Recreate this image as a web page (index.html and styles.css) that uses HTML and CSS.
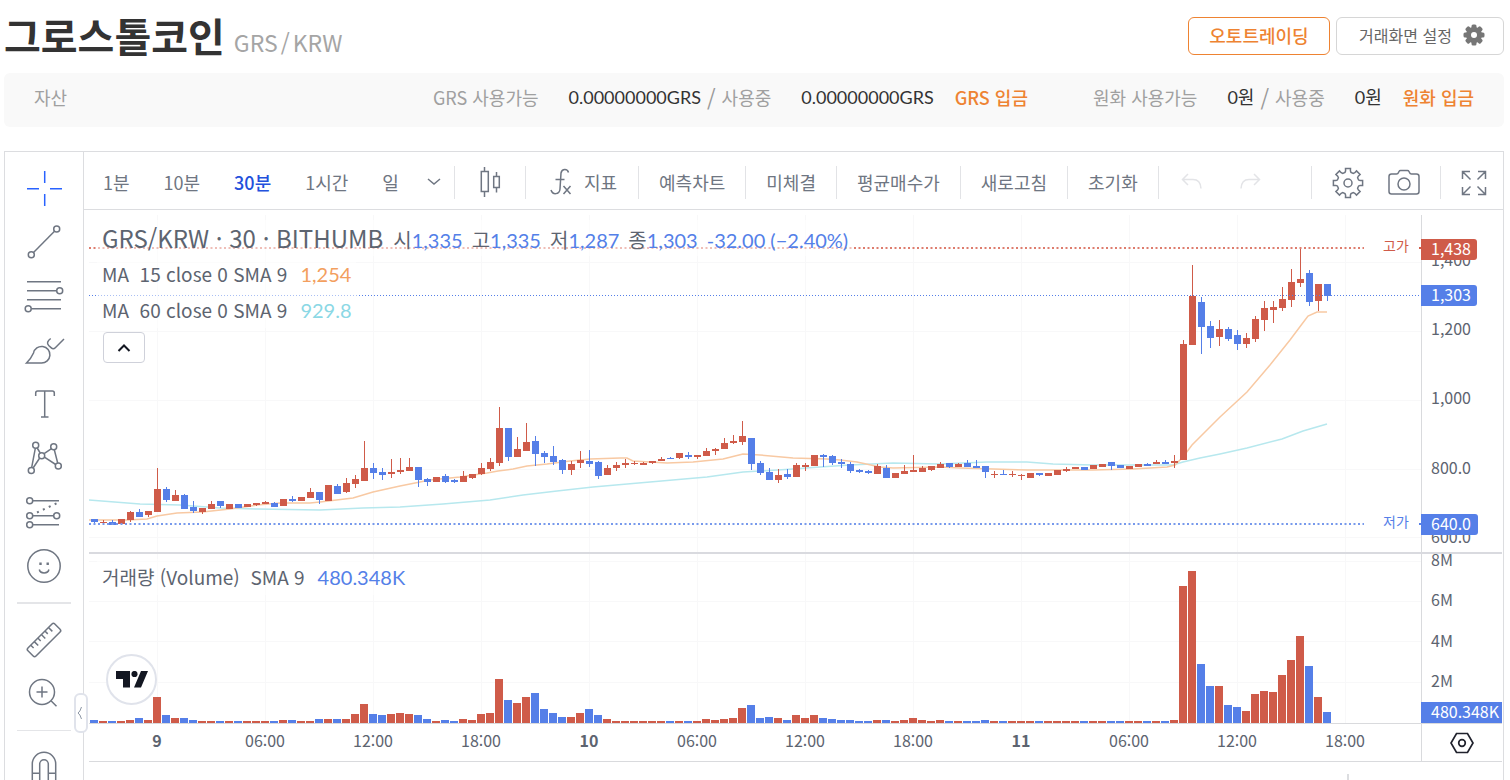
FILE: index.html
```html
<!DOCTYPE html>
<html lang="ko">
<head>
<meta charset="utf-8">
<title>그로스톨코인 GRS/KRW</title>
<link rel="stylesheet" href="styles.css">
</head>
<body>
<header class="page-head">
  <h1 class="coin">그로스톨코인<span class="pair">GRS<span class="slash">/</span>KRW</span></h1>
  <div class="head-actions">
    <button class="btn btn-accent" type="button">오토트레이딩</button>
    <button class="btn btn-setting" type="button">거래화면 설정
      <svg width="22" height="22" viewBox="-11 -11 22 22"><g fill="#767676"><circle r="8"/><g id="teeth"><rect x="-2.5" y="-10.5" width="5" height="21" rx="1.5"/><rect x="-10.5" y="-2.5" width="21" height="5" rx="1.5"/></g><use href="#teeth" transform="rotate(45)"/></g><circle r="3" fill="#fff"/></svg>
    </button>
  </div>
</header>

<section class="assets">
  <span class="muted">자산</span>
  <div class="asset asset-coin"><span class="muted">GRS 사용가능</span><b>0.00000000GRS</b><i>/</i><span class="muted">사용중</span><b>0.00000000GRS</b><a href="#">GRS 입금</a></div>
  <div class="asset"><span class="muted">원화 사용가능</span><b>0원</b><i>/</i><span class="muted">사용중</span><b>0원</b><a href="#">원화 입금</a></div>
</section>

<main class="widget">
  <nav class="tools" aria-label="그리기 도구">
    <button class="tool tool-active" type="button" aria-label="십자선"><svg viewBox="0 0 54 54"><path d="M27.7 10v12M27.7 33v12M10 27.7h12M33 27.7h12"/></svg></button>
    <button class="tool" type="button" aria-label="추세선"><svg viewBox="0 0 54 54"><circle cx="14.3" cy="39.7" r="3"/><circle cx="39.7" cy="14" r="3"/><path d="M16.5 37.5 37.5 16.2"/></svg></button>
    <button class="tool" type="button" aria-label="피보나치"><svg viewBox="0 0 54 54"><path d="M10 12.7h34M10 21.7h29.7M10 30.7h34M14.3 39.7H44"/><circle cx="42.7" cy="21.7" r="3"/><circle cx="11.2" cy="39.7" r="3"/></svg></button>
    <button class="tool" type="button" aria-label="브러쉬"><svg viewBox="0 0 54 54"><path d="M9.5 40c3.500-3.500 5.500-6.500 7-10a8.300 8.300 0 1 1 8 10zM33.700 15.500c-3.500 2.500-4 5-2 7l2.600 2.400q2 1.800 4-.2l8.700-8.700"/></svg></button>
    <button class="tool" type="button" aria-label="텍스트"><svg viewBox="0 0 54 54"><path d="M18.700 19v-3q0-2 2-2h14.600q2 0 2 2v3M27.700 14v26M24 40h7.500"/></svg></button>
    <button class="tool" type="button" aria-label="패턴"><svg viewBox="0 0 54 54"><circle cx="18.700" cy="14.300" r="3"/><circle cx="36.700" cy="15.700" r="3"/><circle cx="24.700" cy="24.700" r="3"/><circle cx="41.300" cy="35" r="3"/><circle cx="14.300" cy="39.500" r="3"/><path d="m18.300 17.400-3.600 19M20.200 17l3 5M34.500 17.700l-7.400 5M37.300 18.700l3.400 13.300M27.400 26.200l11.300 7.300M22.700 27l-6.600 10"/></svg></button>
    <button class="tool" type="button" aria-label="예측"><svg viewBox="0 0 54 54"><circle cx="12.700" cy="15.700" r="3"/><circle cx="12.700" cy="30.700" r="3"/><circle cx="39.700" cy="30.700" r="3"/><circle cx="12.700" cy="39.700" r="3"/><path d="M15.700 15.700H42M15.700 30.700h21M15.700 39.700H42"/><path d="m20 27.500 20-9.300" stroke-dasharray="2 4.500" stroke-width="2"/></svg></button>
    <button class="tool" type="button" aria-label="아이콘"><svg viewBox="0 0 54 54"><circle cx="27" cy="27" r="16.200"/><path d="M22.300 30.500c.8 4.500 8.800 4.500 9.600 0"/><path d="M22.300 24.700h2.400M29.500 24.700h2.400" stroke-width="2.400"/></svg></button>
    <hr>
    <button class="tool" type="button" aria-label="자"><svg viewBox="0 0 54 54"><g transform="rotate(-45 27 28)"><rect x="8" y="22.300" width="38" height="11.400" rx="2"/><path d="M14 22.300v4M19 22.300v5.500M24 22.300v4M29 22.300v5.500M34 22.300v4M39 22.300v5.500"/></g></svg></button>
    <button class="tool" type="button" aria-label="확대"><svg viewBox="0 0 54 54"><circle cx="25" cy="26" r="12.500"/><path d="M25 20.500v11M19.500 26h11M34 34.700l5.500 5.500"/></svg></button>
    <hr class="thin">
    <button class="tool" type="button" aria-label="자석"><svg viewBox="0 0 54 54"><path d="M15.300 45V25a11.700 11.700 0 0 1 23.400 0v20h-7.400V25a4.300 4.300 0 0 0-8.600 0v20zM15.300 34.300h7.400M31.300 34.300h7.400"/></svg></button>
  </nav>
  <button class="fold" type="button" aria-label="도구 접기"><svg width="8" height="14" viewBox="0 0 8 14"><path d="M5.500 1Q4 6 2 7q2 1 3.500 6"/></svg></button>

  <div class="chart">
    <div class="bar">
      <div class="group periods">
        <button type="button">1분</button><button type="button">10분</button><button class="on" type="button">30분</button><button type="button">1시간</button><button type="button">일</button>
        <button class="more" type="button" aria-label="더보기"><svg width="14" height="8" viewBox="0 0 14 8"><path d="m1 1 6 5 6-5"/></svg></button>
      </div>
      <div class="group"><button type="button" aria-label="캔들"><svg width="30" height="30" viewBox="0 0 30 30"><path d="M9.500 0v4M9.500 25v5M6.300 4.500h7v20h-7zM21.500 5v4M21.500 21v4.500M18.700 9.500h5.600v11h-5.600z"/></svg></button></div>
      <div class="group indicators"><button type="button"><svg class="fx" width="24" height="28" viewBox="0 0 24 28"><path d="M19.500 4.500c-1-4-6.500-4-7.500.5l-1 16c-.5 6-7.500 6-9 1M6.500 11.500h9M14.500 18l7 8M21.500 18l-7 8"/></svg>지표</button></div>
      <div class="group"><button type="button">예측차트</button></div>
      <div class="group"><button type="button">미체결</button></div>
      <div class="group"><button type="button">평균매수가</button></div>
      <div class="group"><button type="button">새로고침</button></div>
      <div class="group"><button type="button">초기화</button></div>
      <div class="group undo">
        <button type="button" aria-label="되돌리기" disabled><svg width="22" height="18" viewBox="0 0 22 18"><path d="M7 1 1.500 6.500 7 12M2 6.500h10q7.500 0 8 9"/></svg></button>
        <button type="button" aria-label="다시하기" disabled><svg width="22" height="18" viewBox="0 0 22 18"><path d="m15 1 5.500 5.500L15 12M20 6.500H10q-7.500 0-8 9"/></svg></button>
      </div>
      <div class="group right">
        <button type="button" aria-label="설정"><svg width="32" height="32" viewBox="-16 -16 32 32"><path id="gear" d=""/><circle r="4"/></svg></button>
        <button type="button" aria-label="스냅샷"><svg width="32" height="28" viewBox="0 0 32 28"><path d="M3.500 5h5q1.500 0 2-1.500l.5-1q.5-1 1.500-1h7q1 0 1.500 1l.5 1q.5 1.500 2 1.500h5Q31 5 31 7.500v15q0 2.500-2.500 2.500h-25Q1 25 1 22.500v-15Q1 5 3.500 5z"/><circle cx="16" cy="15" r="6"/></svg></button>
      </div>
      <div class="group full"><button type="button" aria-label="전체화면"><svg width="26" height="26" viewBox="0 0 26 26"><path d="M1.500 9V1.500H9M1.500 1.500l8 8M17 1.500h7.500V9M24.500 1.500l-8 8M1.500 17v7.500H9M1.500 24.500l8-8M24.500 17v7.500H17M24.500 24.500l-8-8"/></svg></button></div>
    </div>

    <div class="board">
      <div class="plot">
        <svg class="plot-svg" id="plot"></svg>
        <div class="legend">
          <div class="row row-main"><span class="symbol">GRS/KRW · 30 · BITHUMB</span><span class="ohlc">시<em>1,335</em></span><span class="ohlc">고<em>1,335</em></span><span class="ohlc">저<em>1,287</em></span><span class="ohlc">종<em>1,303</em></span><em>-32.00 (−2.40%)</em></div>
          <div class="row"><span class="study">MA&nbsp; 15 close 0 SMA 9</span><em class="ma15">1,254</em></div>
          <div class="row"><span class="study">MA&nbsp; 60 close 0 SMA 9</span><em class="ma60">929.8</em></div>
          <button class="collapse" type="button" aria-label="범례 접기"><svg width="14" height="10" viewBox="0 0 14 10"><path d="m1.500 8 5.500-5.500L12.500 8"/></svg></button>
        </div>
        <div class="legend legend-volume"><div class="row"><span class="study">거래량 (Volume)&nbsp; SMA 9</span><em>480.348K</em></div></div>
        <a class="tv" href="#" aria-label="TradingView"><svg width="32" height="17" viewBox="0 0 32 17"><path d="M0 0h14v16.500H7V8H0zM25 0h7l-7 16.500h-7z"/><circle cx="18.500" cy="3" r="3.100"/></svg></a>
      </div>
      <svg class="axis" id="axis"></svg>
      <svg class="times" id="times"></svg>
      <button class="axis-set" type="button" aria-label="축 설정"><svg width="24" height="22" viewBox="0 0 24 22"><path d="M6.500 1.500h11L23 11l-5.500 9.500h-11L1 11z"/><circle cx="12" cy="11" r="3.300"/></svg></button>
    </div>
    <div class="below"></div>
  </div>
</main>
<script src="chart.js"></script>
</body>
</html>
```
FILE: styles.css
```css
* { box-sizing: border-box; }
body {
  margin: 0;
  height: 100vh;
  overflow: hidden;
  display: flex;
  flex-direction: column;
  padding: 0 6px 0 4px;
  background: #fff;
  color: #333;
  font-family: "Noto Sans CJK KR", sans-serif;
  font-size: 18px;
}
button { font: inherit; color: inherit; background: none; border: 0; padding: 0; cursor: pointer; }
svg { display: block; flex: none; }
a { color: #ee8332; text-decoration: none; }
em, i, b { font-style: normal; font-weight: 400; }

.page-head { display: flex; justify-content: space-between; height: 73px; flex: none; }
.coin { margin: 0; font-size: 40px; line-height: 70px; font-weight: 700; }
.pair { margin-left: 9px; font-size: 23px; font-weight: 400; color: #a5a5a5; }
.slash { margin: 0 3px; }
.head-actions { display: flex; gap: 6px; padding-top: 17px; }
.btn { height: 38px; border: 1px solid #d6d6d6; border-radius: 6px; display: flex; align-items: center; justify-content: center; padding-bottom: 2px; }
.btn-accent { width: 142px; border-color: #ee8332; color: #ee8332; font-weight: 500; }
.btn-setting { width: 168px; gap: 11px; padding-left: 4px; color: #666; font-size: 16px; }

.assets { display: flex; height: 54px; flex: none; align-items: center; padding: 0 30px 6px; border-radius: 6px; background: #f9f9f9; line-height: 48px; }
.muted { color: #a0a0a0; }
.asset { display: flex; }
.asset b { margin-left: 30px; font-family: Lato, "Noto Sans CJK KR", sans-serif; color: #333; }
.asset i { margin: 0 6px; font-size: 22px; color: #999; }
.asset a { margin-left: 21px; font-weight: 500; }
.asset-coin { margin-left: auto; margin-right: 65px; }

.widget { position: relative; flex: 1; display: flex; margin-top: 24px; min-height: 0; border: 1px solid #dcdde0; border-bottom: 0; }
.tools { width: 79px; flex: none; display: flex; flex-direction: column; align-items: center; padding-top: 9px; border-right: 1px solid #dcdde0; overflow: hidden; }
.tools hr { width: 54px; flex: none; margin: 9px 0 8px; border: 0; border-top: 2px solid #e4e5e8; }
.tools .thin { margin: 10px 0 8px; border-top-width: 1px; }
.tool { height: 54px; flex: none; }
.tool svg { width: 54px; height: 54px; }
.tool svg, .bar svg { fill: none; stroke: #6f7682; stroke-width: 1.5; }
.tool-active svg { stroke: #2962ff; }
.fold { position: absolute; left: 69px; top: 541px; width: 14px; height: 40px; border: 2px solid #e0e3eb; border-radius: 6px; background: #fff; }
.fold svg { fill: none; stroke: #8d97a5; }

.chart { flex: 1; min-width: 0; display: flex; flex-direction: column; }
.bar { display: flex; align-items: center; height: 58px; border-bottom: 1px solid #dcdde0; color: #6f7682; }
.group { display: flex; align-items: center; height: 33px; margin-top: 3px; padding: 0 20px; border-right: 1px solid #e2e3e6; }
.bar button { display: flex; align-items: center; height: 33px; }
.periods { gap: 34px; padding: 0 13px 0 19px; }
.periods .more { margin-left: -6px; }
.on { color: #2351dc; font-weight: 500; }
.indicators { padding-right: 21px; }
.fx { margin: 0 11px 0 3px; }
.undo { gap: 36px; padding: 0 22px; border-right: 0; }
.bar .undo svg { stroke: #e3e4e7; }
.right { margin-top: 4px; margin-left: auto; gap: 24px; border-left: 1px solid #e2e3e6; }
.full { margin-top: 4px; padding: 0 16px 0 20px; border-right: 0; }

.board { display: grid; grid-template-columns: minmax(0, 1fr) 81px; grid-template-rows: 508px 39px; padding: 5px 1px 0 5px; }
.plot { position: relative; }
.plot-svg, .axis, .times { width: 100%; height: 100%; }
.axis { border-left: 1px solid #d9dadd; overflow: visible; }
.times { border-bottom: 1px solid #d9dadd; border-top: 1px solid #d9dadd; }
.axis-set { display: flex; align-items: center; justify-content: center; border: 1px solid #d9dadd; border-right: 0; }
.axis-set svg { fill: none; stroke: #20222d; stroke-width: 1.700; }
svg text { font-size: 16px; fill: #5d6470; }
svg .day { font-weight: 700; }
svg .tag { fill: #fff; }
svg .mark { font-size: 14px; }
svg .mark-high { fill: #cf5b49; }
svg .mark-low { fill: #557fe8; }

.legend { position: absolute; left: 8px; top: 5px; display: flex; flex-direction: column; align-items: flex-start; color: #5d6470; font-size: 20px; }
.legend em { font-family: Lato, sans-serif; color: #5480e8; }
.legend-volume { top: 344px; }
.row { display: flex; align-items: center; height: 36px; padding: 0 5px; line-height: 28px; white-space: nowrap; background: rgba(255, 255, 255, .5); }
.row-main { align-items: baseline; line-height: 36px; }
.symbol { margin-right: 10px; font-size: 24px; }
.study { margin-right: 13px; font-size: 19px; }
.ohlc { margin-right: 9px; }
.legend .ma15 { color: #f39f5f; }
.legend .ma60 { color: #8bd8e5; }
.collapse { display: flex; align-items: center; justify-content: center; width: 42px; height: 31px; margin: 4px 0 0 6px; border: 1px solid #cfd1da; border-radius: 4px; background: #fff; }
.collapse svg { fill: none; stroke: #131722; stroke-width: 2; }
.tv { position: absolute; left: 17px; top: 439px; width: 51px; height: 51px; display: flex; align-items: center; justify-content: center; border: 2px solid #e0e3eb; border-radius: 50%; background: #fff; fill: #131722; }
.below { flex: 1; margin: 12px 154px 0 0; border-right: 2px solid #dcdde0; }
```
FILE: chart.js
```js
const RED = '#cf5b49', BLUE = '#557fe8';
const PLOT_WIDTH = 1332, X0 = 94, STEP = 9;

// Candles: direction, body top, body bottom, wick top, wick bottom.
const candles = `
B519,522,519,524 R522,523,520,523 B522,525,520,525 R519,524 R512,520,511,522 B512,517,509,517 R511,515,511,517
R489,512,468,512 B489,500,487,502 R495,501,490,501 B495,509,494,509 B507,511,501,513 R508,512,508,514 R504,509,501,509
B501,506,501,508 R504,509 B504,508 R504,507 R503,505,503,506 R502,504,501,504 B503,507,502,507 R499,506
B499,501,496,502 R497,501 R492,498,488,498 B492,500,492,504 R485,501 B486,494,484,494 R483,492,478,493
R479,484,475,488 R468,481,441,481 B468,473,463,479 B472,475,468,480 R472,474,459,478 R470,472,458,474
R467,471,458,471 B467,480,467,487 B479,482,478,486 R477,482 B476,482,474,483 B480,482,479,483 R476,482,471,482
R474,478,474,479 R468,474,463,475 R462,469,458,471 R428,463,407,466 B428,457,428,461 R449,457,437,457
R442,451,423,451 B441,454,436,466 B453,457,451,463 B456,462,446,465 B460,470,459,474 R464,470,461,475
R460,463,451,468 B461,464,450,467 B462,476,461,479 R468,475,465,475 R465,468,462,471 R463,465,459,468
R463,464,461,465 R463,465,462,465 R461,463,461,464 R459,461,457,461 B458,459,457,459 R453,458,453,459
B455,457,452,459 R455,457,455,459 R451,456,448,456 R449,451,448,455 R443,449,438,449 R441,443,435,444
R436,442,421,445 B438,464,438,470 B463,473,461,475 B472,480,468,480 R475,480,469,483 B474,477,469,479
R465,477,463,477 R465,467,463,471 R455,466 B455,457,454,467 B456,463,455,465 B462,464,459,468 B464,471,462,473
B470,472,469,473 B471,473,470,474 R466,474,464,474 B468,478,465,478 R473,478 R471,474,465,474 R470,472,455,472
R468,472,466,472 R466,470,466,471 R464,468,462,468 B463,467,463,468 R464,467,463,467 B463,467,460,467
B466,468,460,468 B466,472,466,478 R474,475,471,478 B474,475,470,475 R474,475,471,477 R475,476,474,480
R473,478 B473,475,473,476 R473,476 R470,475 R469,471,467,472 R467,469 B467,470 R465,469 R464,467
B462,466,462,470 B465,468 R466,469 R464,467 B464,466,463,466 R462,464,460,464 B462,464,460,464
R461,463,455,468 R344,460,340,460 R296,345,265,345 B302,327,297,354 B326,338,321,348 R329,337,320,346
B329,339,327,341 B335,344,330,350 R338,344,333,348 R319,339,316,342 R308,320,301,331 R307,310,301,323
R299,308,287,311 R282,300,269,307 R279,283,248,287 B273,302,270,306 R284,301,284,311 B284,296,284,301
`.trim().split(/\s+/).map(s => {
  const [a, b, c = a, d = b] = s.slice(1).split(',').map(Number);
  return { color: s[0] === 'R' ? RED : BLUE, a, b, c, d };
});

const volumes = [
  3,2,2,2,3,5,3,26,8,5,5,3,2,2,2,2,2,2,2,2,2,3,3,2,2,4,4,4,4,9,19,9,8,9,10,9,8,4,2,3,2,4,3,9,10,44,23,20,26,30,
  14,10,6,6,10,14,8,4,2,2,2,2,2,2,2,2,2,2,4,3,4,5,15,18,5,6,5,3,8,5,8,5,4,3,3,2,2,3,3,2,3,5,3,2,3,2,2,2,2,3,
  2,2,2,2,2,2,2,2,2,2,2,2,2,2,2,2,2,2,2,2,3,137,152,59,37,37,18,16,12,29,32,31,48,63,87,57,26,11
];

const ma15 = '89,520 127,520 147,519 157,516 177,513 202,512 230,509 257,505 280,503 310,503 320,502 353,498 373,492 400,486 430,480 460,477 487,473 498,471 513,469 527,466 547,464 570,461 590,459 620,458 627,458 633,461 667,463 693,462 723,459 743,454 760,455 793,458 827,459 840,460 857,462 880,467 893,468 940,467 960,468 1027,470 1093,470 1133,469 1167,467 1175,465 1183,457 1192,445 1220,417 1247,392 1270,365 1290,340 1302,324 1308,316 1317,312 1327,312';
const ma60 = '89,500 140,504 180,505 220,508 257,509 320,510 363,508 400,507 443,504 490,500 523,495 557,491 593,487 650,482 707,477 743,472 760,471 793,469 820,467 850,465 893,463 940,464 987,462 1027,462 1053,464 1093,465 1147,465 1173,465 1183,462 1200,458 1220,454 1247,448 1282,439 1303,431 1327,424';

const rect = (x, y, w, h, fill) => `<rect x="${x}" y="${y}" width="${w}" height="${h}" fill="${fill}"/>`;
const line = (x1, y1, x2, y2, attrs) => `<line x1="${x1}" y1="${y1}" x2="${x2}" y2="${y2}" ${attrs}/>`;
const text = (x, y, s, attrs = '') => `<text x="${x}" y="${y}" ${attrs}>${s}</text>`;

const labels = ['9', '06:00', '12:00', '18:00', '10', '06:00', '12:00', '18:00', '11', '06:00', '12:00', '18:00'];

function draw() {
  const plot = document.getElementById('plot');
  const width = plot.getBoundingClientRect().width;
  const shift = width - PLOT_WIDTH;
  const grid = 'stroke="#f8f8f9"';
  const dotted = 'stroke-width="2" stroke-dasharray="2 2.5"';
  let back = '', front = '';

  [262, 331, 400, 469, 537, 561, 601, 641, 682].forEach(y => { back += line(0, y - 214.5, width, y - 214.5, grid); });
  labels.forEach((_, i) => { const x = 68.5 + i * 108 + shift; back += line(x, 0, x, 508, grid); });

  candles.forEach((k, i) => {
    const x = X0 + i * STEP;
    front += rect(x, k.c, 1, k.d - k.c, k.color) + rect(x - 3, k.a, 7, k.b - k.a, k.color);
    front += rect(x - 4, 723 - volumes[i], 8, volumes[i], k.color);
  });

  plot.innerHTML = back +
    `<g transform="translate(${shift - 89} -215)"><g fill="none" stroke-width="1.500"><polyline points="${ma60}" stroke="#b7e8ee"/><polyline points="${ma15}" stroke="#f8c9a3"/></g>${front}</g>` +
    line(0, 33, width - 57, 33, `stroke="#de7d6e" ${dotted}`) +
    line(0, 309, width - 57, 309, `stroke="#7799ec" ${dotted}`) +
    line(0, 80.5, width, 80.5, 'stroke="#557fe8" stroke-dasharray="1 2"') +
    line(width - 2, 33, width, 33, `stroke="${RED}" stroke-width="2"`) +
    line(width - 2, 309, width, 309, `stroke="${BLUE}" stroke-width="2"`) +
    text(width - 38, 36, '고가', 'class="mark mark-high"') + text(width - 38, 312, '저가', 'class="mark mark-low"') +
    rect(0, 337, width, 2, '#d9dadf');

  const tag = (y, w, s, c) => `<path d="M-1 ${y}h${w - 3}q3 0 3 3v15q0 3 -3 3h-${w - 3}z" fill="${c}"/>` + text(9, y + 16, s, 'class="tag"');
  document.getElementById('axis').innerHTML =
    [['1,400', 261], ['1,200', 330], ['1,000', 399], ['800.0', 469], ['600.0', 538], ['8M', 561], ['6M', 601], ['4M', 642], ['2M', 682]]
      .map(([s, y]) => text(9, y - 210, s)).join('') +
    rect(-1, 337, 81, 2, '#d9dadf') +
    tag(24, 56, '1,438', RED) + tag(70, 56, '1,303', BLUE) + tag(299, 57, '640.0', BLUE) +
    rect(-1, 487, 81, 21, BLUE) + text(9, 503, '480.348K', 'class="tag"');

  document.getElementById('times').innerHTML = labels
    .map((s, i) => text(68 + i * 108 + shift, 23, s, `text-anchor="middle" ${s.length < 3 ? 'class="day"' : ''}`)).join('');
}

// Eight-toothed outline for the settings button.
function gearPath() {
  const points = [];
  for (let i = 0; i < 8; i++) {
    [[-0.28, 11], [-0.2, 12.3], [-0.17, 14.8], [0.17, 14.8], [0.2, 12.3], [0.28, 11]].forEach(([a, r]) => {
      const t = i * Math.PI / 4 + a;
      points.push(`${(r * Math.sin(t)).toFixed(1)} ${(-r * Math.cos(t)).toFixed(1)}`);
    });
  }
  return `M${points.join('L')}Z`;
}

document.getElementById('gear').setAttribute('d', gearPath());
draw();
window.addEventListener('resize', draw);
```
